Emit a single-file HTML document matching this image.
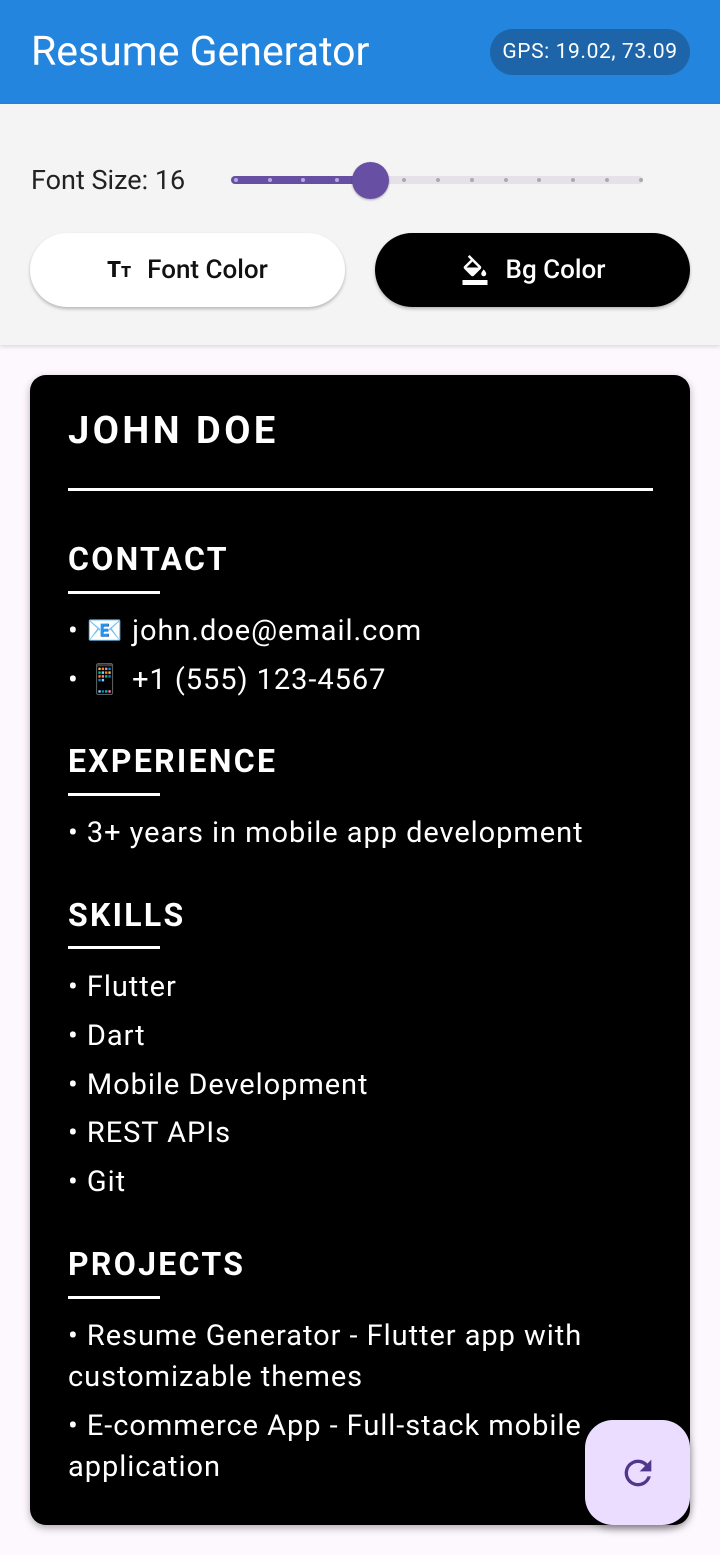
<!DOCTYPE html>
<html><head><meta charset="utf-8"><style>
*{margin:0;padding:0;box-sizing:border-box}
body{width:720px;height:1555px;background:#fdf7fe;font-family:"Roboto","Liberation Sans",sans-serif;position:relative;overflow:hidden}
.a{position:absolute;white-space:nowrap}
.bar{position:absolute;left:0;top:0;width:720px;height:104px;background:#2385dd}
.panel{position:absolute;left:0;top:104px;width:720px;height:241px;background:#f4f4f4;box-shadow:0 2px 4px rgba(0,0,0,.12)}
.btn{position:absolute;top:233px;width:315px;height:74px;border-radius:37px;box-shadow:0 2px 3px rgba(0,0,0,.25);display:flex;align-items:center;justify-content:center;font-size:26px;font-weight:500}
.card{position:absolute;left:30px;top:375px;width:660px;height:1150px;background:#000;border-radius:16px;box-shadow:0 3px 8px rgba(0,0,0,.3)}
.h{position:absolute;left:68px;color:#fff;font-weight:bold;font-size:32px;letter-spacing:2.3px;line-height:40px}
.u{position:absolute;left:68px;height:3px;background:#fff}
.t{position:absolute;left:68px;color:#fff;font-size:29px;line-height:41px;letter-spacing:.95px;white-space:nowrap}
.d{position:absolute;top:178px;width:4px;height:4px;border-radius:50%}
</style></head><body>
<div class="bar"></div>
<div class="a" style="left:31px;top:28px;color:#fff;font-size:41px;line-height:48px">Resume Generator</div>
<div class="a" style="left:490px;top:29px;width:200px;height:46px;border-radius:23px;background:#1e64a8;color:#fff;font-size:21px;line-height:46px;text-align:center;letter-spacing:.6px">GPS: 19.02, 73.09</div>
<div class="panel"></div>
<div class="a" style="left:31px;top:164px;font-size:27px;color:#222;line-height:32px">Font Size: 16</div>
<div class="a" style="left:231px;top:176px;width:412px;height:8px;border-radius:4px;background:#e6e0e9"></div>
<div class="a" style="left:231px;top:176px;width:140px;height:8px;border-radius:4px;background:#6750a4"></div>
<div class="d" style="left:234px;background:#b8a8e0"></div><div class="d" style="left:268px;background:#b8a8e0"></div><div class="d" style="left:301px;background:#b8a8e0"></div><div class="d" style="left:335px;background:#b8a8e0"></div>
<div class="d" style="left:402px;background:#aaa"></div><div class="d" style="left:436px;background:#aaa"></div><div class="d" style="left:470px;background:#aaa"></div><div class="d" style="left:504px;background:#aaa"></div><div class="d" style="left:537px;background:#aaa"></div><div class="d" style="left:571px;background:#aaa"></div><div class="d" style="left:605px;background:#aaa"></div><div class="d" style="left:639px;background:#aaa"></div>
<div class="a" style="left:352px;top:162px;width:37px;height:37px;border-radius:50%;background:#6750a4;box-shadow:0 1px 2px rgba(0,0,0,.3)"></div>
<div class="btn" style="left:30px;background:#fff;color:#111"><span style="font-weight:900;font-size:22px;margin-right:16px">T<span style="font-size:16px">T</span></span>Font Color</div>
<div class="btn" style="left:375px;background:#000;color:#fff"><svg width="30" height="30" viewBox="0 0 24 24" style="margin-right:16px"><path fill="#fff" d="M16.56 8.94 7.62 0 6.21 1.41l2.38 2.38-5.15 5.15a1.49 1.49 0 0 0 0 2.12l5.5 5.5c.29.29.68.44 1.06.44s.77-.15 1.06-.44l5.5-5.5c.59-.58.59-1.530 0-2.12zM5.21 10 10 5.21 14.79 10H5.21zM19 11.5s-2 2.17-2 3.5c0 1.1.9 2 2 2s2-.9 2-2c0-1.33-2-3.5-2-3.5zM2 20h20v4H2z"/></svg>Bg Color</div>
<div class="card"></div>
<div class="h" style="top:408px;font-size:38px;line-height:46px;letter-spacing:3.5px">JOHN DOE</div>
<div class="u" style="top:488px;width:585px"></div>
<div class="h" style="top:539px">CONTACT</div><div class="u" style="top:591px;width:92px"></div>
<div class="t" style="top:611px">• 📧 john.doe@email.com</div>
<div class="t" style="top:660px">• 📱 +1 (555) 123-4567</div>
<div class="h" style="top:741px">EXPERIENCE</div><div class="u" style="top:793px;width:92px"></div>
<div class="t" style="top:813px">• 3+ years in mobile app development</div>
<div class="h" style="top:895px">SKILLS</div><div class="u" style="top:946px;width:92px"></div>
<div class="t" style="top:967px">• Flutter</div>
<div class="t" style="top:1016px">• Dart</div>
<div class="t" style="top:1065px">• Mobile Development</div>
<div class="t" style="top:1113px">• REST APIs</div>
<div class="t" style="top:1162px">• Git</div>
<div class="h" style="top:1244px">PROJECTS</div><div class="u" style="top:1296px;width:92px"></div>
<div class="t" style="top:1316px">• Resume Generator - Flutter app with<br>customizable themes</div>
<div class="t" style="top:1406px">• E-commerce App - Full-stack mobile<br>application</div>
<div class="a" style="left:585px;top:1420px;width:105px;height:105px;border-radius:28px;background:#eaddff;box-shadow:0 4px 8px rgba(0,0,0,.3);display:flex;align-items:center;justify-content:center">
<svg width="40" height="40" viewBox="0 0 24 24"><path fill="#4f378b" d="M17.65 6.35A7.96 7.96 0 0 0 12 4a8 8 0 1 0 7.73 10h-2.08A6 6 0 1 1 12 6c1.66 0 3.14.69 4.22 1.78L13 11h7V4l-2.35 2.35z"/></svg></div>
</body></html>
